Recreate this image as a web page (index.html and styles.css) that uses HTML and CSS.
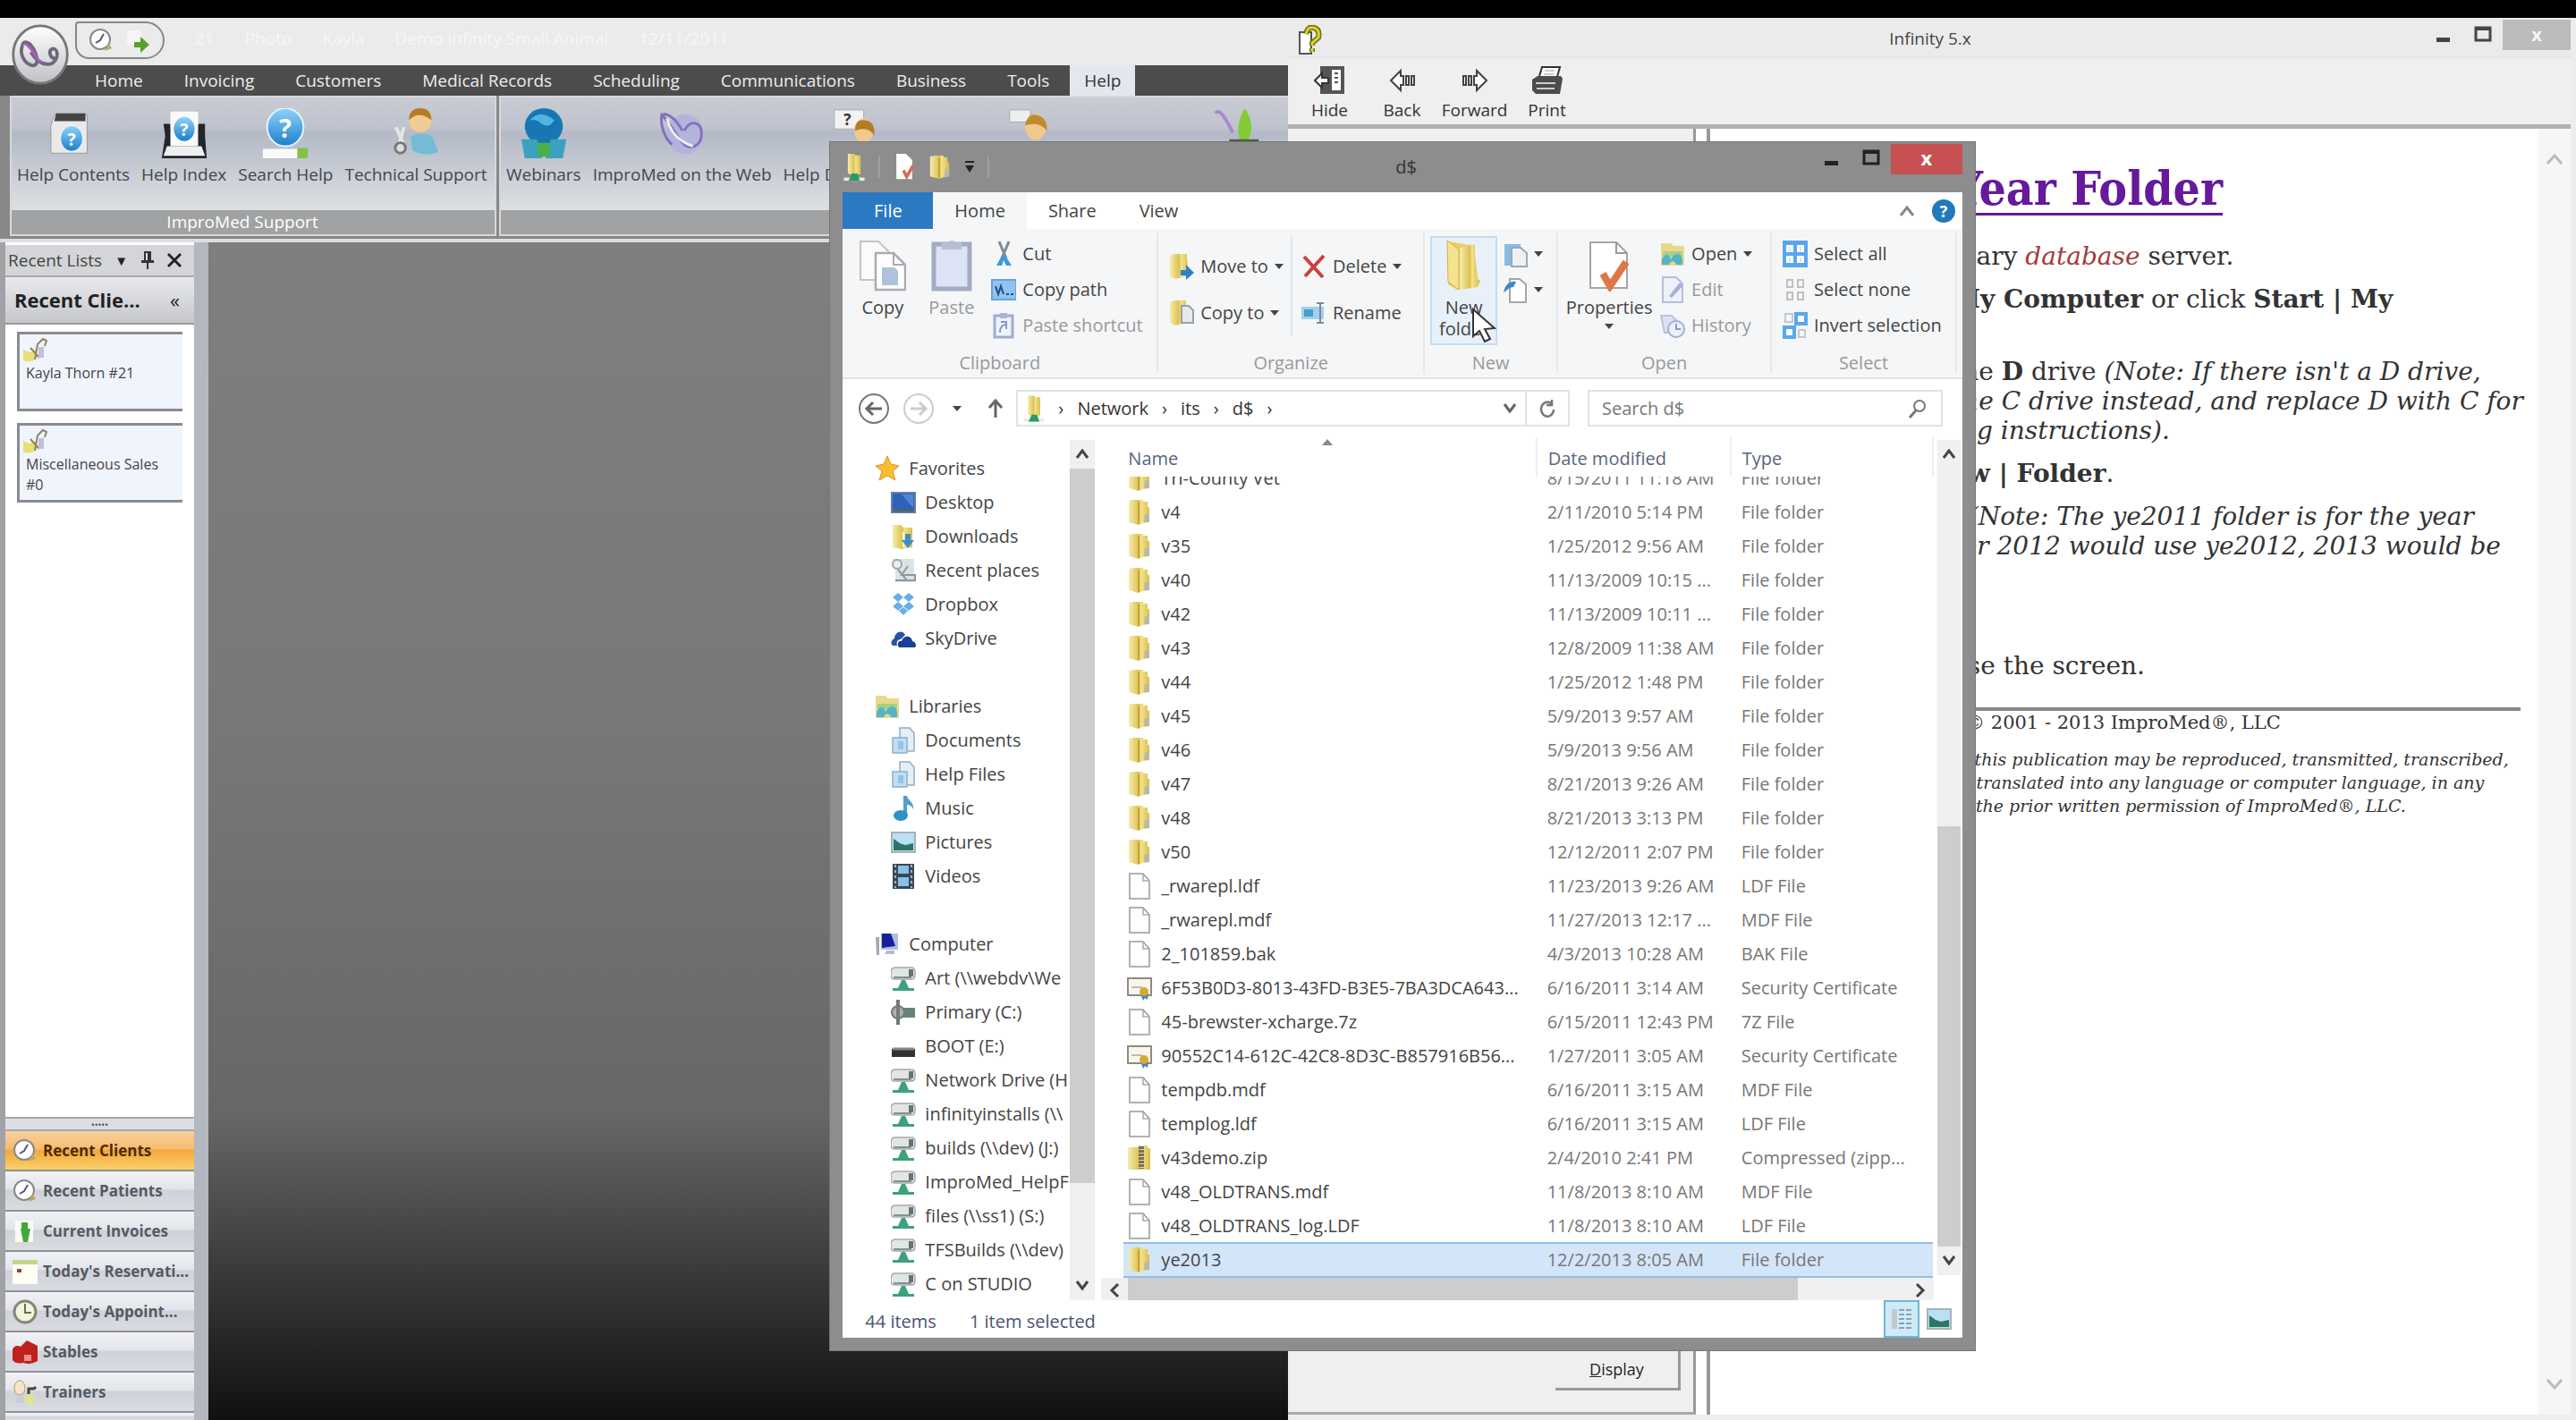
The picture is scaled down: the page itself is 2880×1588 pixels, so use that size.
FILE: index.html
```
<!DOCTYPE html>
<html lang="en">
<head>
    <meta charset="UTF-8">
    <meta name="viewport" content="width=device-width, initial-scale=1.0">
    <title>Infinity</title>
    <link rel="stylesheet" href="styles.css">
</head>
<body>
    <svg class="defs" aria-hidden="true">
        <linearGradient id="gold" x1="0" x2="1"><stop offset="0" stop-color="#f6ecae"/><stop offset=".5" stop-color="#dcc251"/><stop offset=".6" stop-color="#f3e38f"/><stop offset="1" stop-color="#d8bd4e"/></linearGradient>
        <linearGradient id="blue" x1="0" y1="0" x2="0" y2="1"><stop offset="0" stop-color="#8fd4fb"/><stop offset="1" stop-color="#1b7fcb"/></linearGradient>
        <linearGradient id="silver" x1="0" y1="0" x2="0" y2="1"><stop offset="0" stop-color="#fff"/><stop offset="1" stop-color="#bfc0c6"/></linearGradient>
        <symbol id="folder" viewBox="0 0 28 30"><path d="M2 2l6-1h10v2h5v6h2v17l-7 1-5 2-11-3z" fill="url(#gold)"/><path d="M13 4v24" stroke="#c4a436" stroke-width="2"/><path d="M20 17h5v9h-6z" fill="#b9b8a4"/></symbol>
        <symbol id="file" viewBox="0 0 28 30"><path d="M3 1h15l7 8v20H3z" fill="#fff" stroke="#999" stroke-width="1.5"/><path d="M18 1v8h7" fill="none" stroke="#aaa" stroke-width="1.5"/></symbol>
        <symbol id="cert" viewBox="0 0 28 30"><rect x="1" y="4" width="26" height="19" fill="#f8f5ec" stroke="#8e8a80" stroke-width="2"/><path d="M5 14h12" stroke="#bbb" stroke-width="2"/><path d="M15 21l3 8 2-3 3 2 1-7z" fill="#4c7fc0"/><circle cx="19" cy="19" r="5" fill="#d5ab2d"/></symbol>
        <symbol id="zip" viewBox="0 0 28 30"><path d="M1 3h12v-2h10v3h3v24H1z" fill="url(#gold)"/><path d="M16 2v25" stroke="#77715a" stroke-width="6" stroke-dasharray="3 1"/></symbol>
        <symbol id="star" viewBox="0 0 28 30"><path d="M14 1l4 9 9 2-7 6 3 10-9-5-9 5 3-10-7-6 9-2z" fill="#f8bd32" stroke="#dc9235"/></symbol>
        <symbol id="desktop" viewBox="0 0 28 30"><rect x="1" y="4" width="26" height="22" fill="#2e62b8" stroke="#6580a8" stroke-width="2"/><path d="M2 24h24" stroke="#53616f" stroke-width="3"/><path d="M12 6l13 15V6z" fill="#4f86d6"/></symbol>
        <symbol id="downloads" viewBox="0 0 28 30"><path d="M2 2h9l3 3h10v22l-12 2-10-2z" fill="url(#gold)"/><path d="M14 10v17" stroke="#fff8c8" stroke-width="2"/><path d="M16 12h6v7h4l-7 9-7-9h4z" fill="#3b8fcc"/></symbol>
        <symbol id="recent" viewBox="0 0 28 30"><path d="M2 2h24v26H5V14z" fill="#dde2e4"/><circle cx="7" cy="8" r="5" fill="#eee" stroke="#9ba5a9" stroke-width="2"/><path d="M5 26h22v-6H12l7-10M8 14l10 12" fill="none" stroke="#8d999e" stroke-width="2"/></symbol>
        <symbol id="dropbox" viewBox="0 0 28 30"><path d="M8 2l6 5-6 5-6-5zM20 2l6 5-6 5-6-5zM8 12l6 5-6 5-6-5zM20 12l6 5-6 5-6-5zM14 18l5 4-5 5-5-5z" fill="#68aee8"/></symbol>
        <symbol id="cloud" viewBox="0 0 28 30"><path d="M2 23c-3-3-1-7 2-8 0-6 8-11 12-4l-5 5c-4 0-5 4-4 7z" fill="#2753a4"/><path d="M9 25c-3-4 0-8 3-7 2-7 11-7 12 0 4 1 5 5 3 7z" fill="#1b3f98"/></symbol>
        <symbol id="library" viewBox="0 0 28 30"><path d="M1 3h11l3 3h12v22H1z" fill="#e8d98a"/><path d="M3 12h22v6H3z" fill="#a9cf87"/><path d="M2 27v-6c4-7 8-7 10 0 4-9 12-7 13 0v6h-7c-2-5-6-5-8 0z" fill="#55b4c7"/></symbol>
        <symbol id="docs" viewBox="0 0 28 30"><path d="M10 1h11l5 6v20H10z" fill="#e3eef7" stroke="#96abc0" stroke-width="1.5"/><path d="M2 12h16v17H2z" fill="#c4def0" stroke="#87b1d0" stroke-width="1.5"/><path d="M8 16h6v9H8z" fill="#91c4e8"/></symbol>
        <symbol id="music" viewBox="0 0 28 30"><path d="M14 1h4c1 5 8 7 7 15-2-4-4-5-7-5v13h-4z" fill="#519fce"/><ellipse cx="11" cy="23" rx="8" ry="6" fill="#318fc9"/></symbol>
        <symbol id="pictures" viewBox="0 0 28 30"><rect x="1" y="4" width="26" height="22" fill="#b9e0f5" stroke="#a6b2b8" stroke-width="2"/><path d="M3 11l7 5 6 2 9-2v8H3z" fill="#2e7663"/></symbol>
        <symbol id="videos" viewBox="0 0 28 30"><path d="M2 1h24v28H2z" fill="#35495a"/><path d="M8 3h12v9H8zM8 16h12v10H8z" fill="#8ac0e2"/><path d="M5 2v26M23 2v26" stroke="#a5b3bd" stroke-width="2" stroke-dasharray="3 3"/></symbol>
        <symbol id="computer" viewBox="0 0 28 30"><path d="M1 7h4v20H2z" fill="#a3a9b5"/><path d="M7 3h19v18H7z" fill="#a9bfe6"/><path d="M8 3h10l5 14-15 2z" fill="#16209a"/><path d="M13 22h9v4H11z" fill="#b9bcc6"/></symbol>
        <symbol id="drive" viewBox="0 0 28 30"><path d="M4 3h19q4 0 4 5v3q0 5-4 5H4q-4 0-4-4V9q0-5 4-6z" fill="#e1e5e4" stroke="#a3abaa" stroke-width="1.5"/><path d="M3 14h20" stroke="#84918f" stroke-width="2"/><path d="M20 5h5v8h-5z" fill="#62756f"/><path d="M12 17h4l4 9h6v3H2v-3h6z" fill="#3da27a"/></symbol>
        <symbol id="disk" viewBox="0 0 28 30"><path d="M13 10h14v11H13z" fill="#668577"/><circle cx="8" cy="15" r="7" fill="#aab1b0" stroke="#727a79" stroke-width="2"/><path d="M8 1v28" stroke="#737a79" stroke-width="4"/></symbol>
        <symbol id="boot" viewBox="0 0 28 30"><path d="M1 18h26v9H1z" fill="#333"/><path d="M2 18h24" stroke="#888" stroke-width="3"/></symbol>
        <symbol id="netfolder" viewBox="0 0 28 36"><path d="M6 1h9v2h7v24H8l-2-2z" fill="url(#gold)"/><path d="M1 33h26" stroke="#e5ebe5" stroke-width="4"/><path d="M11 26h7l3 9H7z" fill="#2c9c5c"/></symbol>
        <symbol id="sheetcheck" viewBox="0 0 28 36"><path d="M4 1h12l8 8v24H4z" fill="#fff"/><path d="M13 22l4 8 8-14" stroke="#d9694d" stroke-width="4" fill="none"/></symbol>
        <symbol id="copy" viewBox="0 0 52 58"><path d="M1 2h20l11 11v32H1z" fill="#fbfbfb" stroke="#c4c4c4" stroke-width="2"/><path d="M18 15h20l13 13v28H18z" fill="#fff" stroke="#a9abb0" stroke-width="2.5"/><path d="M38 15v13h13" fill="none" stroke="#a9abb0" stroke-width="2"/><path d="M25 31h14l4 4v16H25z" fill="#afc1de"/></symbol>
        <symbol id="paste" viewBox="0 0 52 58"><rect x="6" y="5" width="40" height="50" fill="#dce3f5" stroke="#a2abc6" stroke-width="5"/><path d="M15 3h6q5-4 10 0h6v8H15z" fill="#b8bfd2"/></symbol>
        <symbol id="bigfolder" viewBox="0 0 52 58"><path d="M8 2l24 4h6v10l4 34-24 6-10-6z" fill="#e9cf5f"/><path d="M7 1l13 10v45L8 47z" fill="#f6e392" stroke="#d4b23c"/><path d="M21 9l16-4v36l7 5-3 7-20 3z" fill="url(#gold)"/></symbol>
        <symbol id="props" viewBox="0 0 52 58"><path d="M5 3h29l12 12v39H5z" fill="#fff" stroke="#a5a5a5" stroke-width="2"/><path d="M34 3v12h12" fill="none" stroke="#999" stroke-width="2"/><path d="M19 38l8 14 18-27" fill="none" stroke="#df7746" stroke-width="8"/></symbol>
        <symbol id="cut" viewBox="0 0 28 30"><path d="M9 1l8 19M20 1l-8 19" stroke="#7f8b96" stroke-width="3"/><path d="M12 17L6 28h6l2-6 3 6h6l-7-11z" fill="#3c9bd3"/></symbol>
        <symbol id="copypath" viewBox="0 0 28 30"><rect x="1" y="4" width="27" height="22" fill="#91c3f0" stroke="#66a4dc" stroke-width="2"/><path d="M5 11l3 9 3-9 3 9M17 20h3M22 20h3" stroke="#1d4f84" stroke-width="2" fill="none"/></symbol>
        <symbol id="shortcut" viewBox="0 0 28 30"><rect x="4" y="4" width="20" height="24" fill="#eef2fb" stroke="#9faccc" stroke-width="3"/><path d="M10 1h8v6h-8z" fill="#a9b5d0"/><path d="M10 23c0-7 3-9 7-9v-3h-6M17 10v9" stroke="#8798c2" stroke-width="2" fill="none"/></symbol>
        <symbol id="moveto" viewBox="0 0 28 30"><path d="M1 3l5-2h14v4l2 20-15 4-6-3z" fill="url(#gold)"/><path d="M13 19h6v-6l9 9-9 8v-5h-6z" fill="#2f80c4"/></symbol>
        <symbol id="copyto" viewBox="0 0 28 30"><path d="M1 3l5-2h13v4l2 20-14 4-6-3z" fill="url(#gold)"/><path d="M14 7h8l5 5v14H14z" fill="#e6e9ee" stroke="#999fa8" stroke-width="2"/></symbol>
        <symbol id="delete" viewBox="0 0 28 30"><path d="M3 4l21 23M25 3L4 26" stroke="#c9413c" stroke-width="4"/></symbol>
        <symbol id="rename" viewBox="0 0 28 30"><rect x="0" y="8" width="25" height="14" fill="#a3d0ec"/><path d="M3 11h10v8H3z" fill="#459fcd"/><path d="M17 4h8M17 26h8M21 4v22" stroke="#7e8a94" stroke-width="2"/></symbol>
        <symbol id="newitem" viewBox="0 0 28 30"><path d="M2 4h18v4H9v20H2z" fill="#86bce0"/><path d="M10 8h10l7 6v15H10z" fill="#edf1f4" stroke="#a0a8ae" stroke-width="2"/></symbol>
        <symbol id="easy" viewBox="0 0 28 30"><path d="M8 3h11l7 6v20H8z" fill="#fff" stroke="#a5a5a5" stroke-width="2"/><path d="M1 18C3 8 9 5 15 6l-3 6c-5 0-7 4-11 6z" fill="#3f88c9"/></symbol>
        <symbol id="edit" viewBox="0 0 28 30"><path d="M3 1h15l7 7v21H3z" fill="#eef1fa" stroke="#b6bedb" stroke-width="2"/><path d="M10 22l12-15 4 3-13 14z" fill="#a6b0d5"/></symbol>
        <symbol id="history" viewBox="0 0 28 30"><path d="M1 4h12l6 6v13H5z" fill="#dce1f2" stroke="#b9c1de" stroke-width="2"/><circle cx="18" cy="19" r="9" fill="#eceffa" stroke="#a4add3" stroke-width="2"/><path d="M18 13v6h5" stroke="#8f9aca" stroke-width="2" fill="none"/></symbol>
        <symbol id="selall" viewBox="0 0 28 30"><rect width="28" height="30" fill="#58a7ee"/><path d="M4 5h8v8H4zM16 5h8v8h-8zM4 17h8v8H4zM16 17h8v8h-8z" fill="#fff"/><path d="M8 7v5M20 7v5M8 19v5M20 19v5" stroke="#cde5fa" stroke-width="2"/></symbol>
        <symbol id="selnone" viewBox="0 0 28 30"><path d="M5 4h6v8H5zM17 4h6v8h-6zM5 18h6v8H5zM17 18h6v8h-6z" fill="none" stroke="#c0c0c0" stroke-width="2"/></symbol>
        <symbol id="selinv" viewBox="0 0 28 30"><path d="M3 2h8v9H3zM18 20h7v8h-7z" fill="none" stroke="#c4c8cc" stroke-width="2"/><path d="M15 2h11v11H15zM2 17h11v11H2z" fill="#fff" stroke="#58a7ee" stroke-width="4"/></symbol>
        <symbol id="clock" viewBox="0 0 30 30"><circle cx="14" cy="14" r="11" fill="#fff" stroke="#888" stroke-width="2"/><path d="M18 8l-4 7-5 3" stroke="#557" stroke-width="2" fill="none"/><path d="M23 18l4 6-8 3z" fill="#b9a66c"/></symbol>
        <symbol id="client" viewBox="0 0 30 30"><path d="M1 15l7 3 8-3v10q-9 6-15 2z" fill="#e9df76"/><path d="M14 26l3-17 6-6 4 2-2 6M9 13l10 11" fill="none" stroke="#8e8564" stroke-width="2"/><path d="M18 12h6v12h-6z" fill="#c5bedd"/></symbol>
    </svg>

    <div class="screen">
        <!-- practice management window -->
        <section class="app">
            <header class="app-title">
                <button class="orb" aria-label="Application menu">
                    <svg viewBox="0 0 70 74"><ellipse cx="35" cy="37" rx="32" ry="34" fill="url(#silver)" stroke="#777" stroke-width="3"/><path d="M14 26c-4 10 2 22 12 24 10 0 4-18-4-26-6-4-8 0-8 2M24 34c6 10 14 16 24 14 10-6 8-18 2-18-6 2-4 10 2 12" fill="none" stroke="#6e6878" stroke-width="4"/><path d="M16 24c8 2 14 18 20 22" fill="none" stroke="#a95fc0" stroke-width="3"/></svg>
                </button>
                <div class="quick">
                    <button aria-label="Time clock"><svg class="i30"><use href="#clock"/></svg></button>
                    <button aria-label="Log off"><svg class="i30" viewBox="0 0 30 30"><path d="M2 4h16v16H2z" fill="#f5f5f5"/><path d="M10 17h7v-6l10 9-10 9v-6h-7z" fill="#58a12c"/></svg></button>
                </div>
                <span>21</span><span>Photo</span><span>Kayla</span><span>Demo Infinity Small Animal</span><span>12/11/2011</span>
            </header>
            <nav class="app-tabs">
                <button>Home</button><button>Invoicing</button><button>Customers</button><button>Medical Records</button><button>Scheduling</button><button>Communications</button><button>Business</button><button>Tools</button><button class="on">Help</button>
            </nav>
            <div class="app-ribbon">
                <div class="group">
                    <div class="group-buttons">
                        <button><svg viewBox="0 0 56 60"><path d="M6 8h38v44H2V20z" fill="#e9e9ea" stroke="#999"/><path d="M8 6h34v9H6z" fill="#444"/><ellipse cx="26" cy="35" rx="13" ry="15" fill="url(#blue)" stroke="#fff"/><text x="26" y="43" class="q">?</text></svg>Help Contents</button>
                        <button><svg viewBox="0 0 56 60"><path d="M4 18h8l2 24h28l2-24h8v14l2 26H2l4-26z" fill="#22262b"/><path d="M12 4h32v40H12z" fill="#fafafa"/><path d="M8 44h40l4 11H4z" fill="#f0f0f0"/><ellipse cx="28" cy="24" rx="12" ry="14" fill="url(#blue)"/><text x="28" y="32" class="q">?</text></svg>Help Index</button>
                        <button><svg viewBox="0 0 56 60"><ellipse cx="28" cy="22" rx="21" ry="22" fill="url(#blue)" stroke="#e4f4ff" stroke-width="2"/><text x="28" y="34" class="q large">?</text><path d="M2 47h40v11H2z" fill="#fafafa"/><path d="M42 46h12v12H42z" fill="#83c341"/></svg>Search Help</button>
                        <button><svg viewBox="0 0 56 60"><ellipse cx="33" cy="14" rx="13" ry="14" fill="#f0cb94"/><path d="M20 14Q20 0 33 0t13 14q-7-6-14-6t-12 6z" fill="#b67d24"/><path d="M22 33q12-7 25 0l7 18q-15 6-30-2z" fill="#74bcd6"/><path d="M5 22l8 18M14 22L8 44" stroke="#e6e6e6" stroke-width="4"/><circle cx="10" cy="46" r="6" fill="#ddd" stroke="#777" stroke-width="3"/></svg>Technical Support</button>
                    </div>
                    <div class="group-name">ImproMed Support</div>
                </div>
                <div class="group wide">
                    <div class="group-buttons">
                        <button><svg viewBox="0 0 56 60"><ellipse cx="28" cy="21" rx="22" ry="21" fill="#1777b3"/><path d="M12 14q12-14 28 0-6 10-14 4t-14-4z" fill="#4fb7dc"/><path d="M2 36h18l6 22H6zM36 36h18l-4 22H30z" fill="#3ca0c1"/><path d="M20 40h15v16H22z" fill="#4bb04a"/></svg>Webinars</button>
                        <button><svg viewBox="0 0 56 60"><ellipse cx="31" cy="30" rx="22" ry="23" fill="#b3b4dd"/><path d="M4 8c6-4 16 4 24 18M30 26c8-14 20-10 20 4s-14 20-22 10S10 12 4 8c-2 12 4 28 12 34" fill="none" stroke="#8570b9" stroke-width="3"/><path d="M10 12q6 24 30 32" fill="none" stroke="#eee" stroke-width="3"/></svg>ImproMed on the Web</button>
                        <button class="w1" aria-label="Help Desk"><svg viewBox="0 0 56 60"><path d="M4 2h34v22H4z" fill="#f2f2f2" stroke="#aaa"/><text x="19" y="20" class="q dark">?</text><ellipse cx="38" cy="26" rx="11" ry="14" fill="#f0c98f"/><path d="M28 26q0-14 12-12t10 18q-6-12-22-6z" fill="#b27d24"/></svg>Help D</button>
                        <button class="w2" aria-label="Customer support"><svg viewBox="0 0 56 60"><path d="M4 2h24v14H4z" fill="#eee" stroke="#aaa"/><ellipse cx="34" cy="22" rx="12" ry="15" fill="#f0c98f"/><path d="M22 20q2-15 14-12t11 18q-10-12-25-6z" fill="#c08a2d"/></svg></button>
                        <button class="w3" aria-label="Release notes"><svg viewBox="0 0 56 60"><path d="M2 6c4-6 10 2 20 22" fill="none" stroke="#aa86cf" stroke-width="4"/><path d="M36 0q16 24-2 46-12-24 2-46z" fill="#83cb35"/><path d="M18 36h34v8H18z" fill="#4c6042"/></svg></button>
                    </div>
                    <div class="group-name"></div>
                </div>
            </div>
            <div class="work">
                <aside class="side">
                    <div class="side-top"><span>Recent Lists</span><button aria-label="Options">▼</button>
                        <button aria-label="Pin"><svg viewBox="0 0 16 22"><path d="M4 1h8v10h3v3H9v7H7v-7H1v-3h3z" fill="#333"/><path d="M6 3h2v8H6z" fill="#ddd"/></svg></button>
                        <button aria-label="Close"><svg viewBox="0 0 16 22"><path d="M1 4l14 14M15 4L1 18" stroke="#222" stroke-width="3"/></svg></button></div>
                    <h2>Recent Clie...<span>«</span></h2>
                    <div class="cards">
                        <button class="card"><svg class="i30"><use href="#client"/></svg>Kayla Thorn #21</button>
                        <button class="card"><svg class="i30"><use href="#client"/></svg>Miscellaneous Sales #0</button>
                    </div>
                    <div class="grip">•••••</div>
                    <button class="bar on"><svg class="i30"><use href="#clock"/></svg>Recent Clients</button>
                    <button class="bar"><svg class="i30"><use href="#clock"/></svg>Recent Patients</button>
                    <button class="bar"><svg class="i30" viewBox="0 0 30 30"><path d="M4 3h20v24H4z" fill="#f8fff5"/><path d="M11 5h7v7h3l-3 15h-5l-3-15h1z" fill="#46a63c"/></svg>Current Invoices</button>
                    <button class="bar"><svg class="i30" viewBox="0 0 30 30"><path d="M1 3h28v26H1z" fill="#fffef5"/><path d="M1 2h28v5H1z" fill="#c5d58c"/><path d="M6 12h5v4H6z" fill="#8a4a3c"/></svg>Today's Reservati...</button>
                    <button class="bar"><svg class="i30" viewBox="0 0 30 30"><circle cx="15" cy="15" r="12" fill="#f1f2df" stroke="#868673" stroke-width="3"/><path d="M15 6v10h7" stroke="#71713a" stroke-width="2" fill="none"/></svg>Today's Appoint...</button>
                    <button class="bar"><svg class="i30" viewBox="0 0 30 30"><path d="M1 12q3-6 9-3l7-7 12 6v17q-8 5-16 2-8 2-12-3z" fill="#c1211c"/><path d="M14 18h8v7h-8z" fill="#ef9088"/></svg>Stables</button>
                    <button class="bar"><svg class="i30" viewBox="0 0 30 30"><ellipse cx="9" cy="10" rx="6" ry="8" fill="#f3e6cc" stroke="#b79b60"/><path d="M3 27q2-9 10-9l4 9z" fill="#cdcbe0"/><circle cx="20" cy="23" r="6" fill="#dce693"/><path d="M19 17v-6h6l2-2" stroke="#444" stroke-width="3" fill="none"/></svg>Trainers</button>
                    <div class="bar last"></div>
                </aside>
            </div>
        </section>

        <!-- help viewer -->
        <section class="help">
            <header class="help-title">
                <svg viewBox="0 0 28 34"><path d="M3 8h13v24H3z" fill="#fff" stroke="#555" stroke-width="2"/><path d="M10 10q2-9 9-7t5 11l-7 6v3M17 26v4" fill="none" stroke="#6c6b16" stroke-width="6"/><path d="M10 10q2-9 9-7t5 11l-7 6v3M17 26v4" fill="none" stroke="#d5d52c" stroke-width="3"/></svg>
                <h1>Infinity 5.x</h1>
                <button aria-label="Minimize"><svg viewBox="0 0 20 24"><path d="M2 15h15v5H2z" fill="#444"/></svg></button>
                <button aria-label="Maximize"><svg viewBox="0 0 20 24"><path d="M2 4h16v14H2z" fill="none" stroke="#444" stroke-width="3"/><path d="M2 5h16" stroke="#444" stroke-width="4"/></svg></button>
                <button class="close" aria-label="Close">x</button>
            </header>
            <div class="help-tools">
                <button><svg viewBox="0 0 36 34"><path d="M7 1h27v31H7z" fill="#555"/><path d="M20 5h10v23H20z" fill="#fff"/><path d="M23 9h4M23 14h4M23 19h4" stroke="#555" stroke-width="2"/><path d="M1 17l8-8v5h7v6H9v5z" fill="#fff" stroke="#333" stroke-width="2"/></svg>Hide</button>
                <button><svg viewBox="0 0 36 34"><path d="M5 17l11-11v6h3v10h-3v6zM22 12h3v10h-3zM28 12h3v10h-3z" fill="#fff" stroke="#444" stroke-width="2"/></svg>Back</button>
                <button><svg viewBox="0 0 36 34"><path d="M31 17L20 6v6h-3v10h3v6zM11 12h3v10h-3zM5 12h3v10H5z" fill="#fff" stroke="#444" stroke-width="2"/></svg>Forward</button>
                <button><svg viewBox="0 0 36 34"><path d="M12 2h20l-4 14H8z" fill="#fff" stroke="#333" stroke-width="2"/><path d="M1 16l6-4h26l2 3-3 17H5l-4-4z" fill="#4c4c4c"/><path d="M5 20h22M6 26h20M15 6h11M14 10h11" stroke="#ccc" stroke-width="2"/></svg>Print</button>
            </div>
            <div class="help-body">
                <div class="help-index"><button><u>D</u>isplay</button></div>
                <article class="topic">
                    <h1><a href="#">Year Folder</a></h1>
                    <p>mary <em class="term">database</em> server.</p>
                    <p class="skip-one"><b>My Computer</b> or click <b>Start | My</b></p>
                    <p>the <b>D</b> drive <em>(Note: If there isn't a D drive,<br>the C drive instead, and replace D with C for<br>ing instructions).</em></p>
                    <p><b>ew | Folder</b>.</p>
                    <p class="skip-two"><em>&nbsp;&nbsp;(Note: The ye2011 folder is for the year<br>for 2012 would use ye2012, 2013 would be</em></p>
                    <p>ose the screen.</p>
                    <footer>
                        <p>t © 2001 - 2013 ImproMed®, LLC</p>
                        <p class="legal">of this publication may be reproduced, transmitted, transcribed,<br>or translated into any language or computer language, in any<br>ut the prior written permission of ImproMed®, LLC.</p>
                    </footer>
                </article>
                <div class="help-scroll"><svg viewBox="0 0 20 12"><path d="M2 11l8-9 8 9" class="chev pale"/></svg><svg viewBox="0 0 20 12"><path d="M2 1l8 9 8-9" class="chev pale"/></svg></div>
            </div>
        </section>

        <!-- file explorer, on top of both windows -->
        <section class="explorer">
            <header class="ex-title">
                <svg class="tall"><use href="#netfolder"/></svg><i></i>
                <button aria-label="Properties"><svg class="tall"><use href="#sheetcheck"/></svg></button>
                <button aria-label="New folder"><svg class="tall"><use href="#folder"/></svg></button>
                <button aria-label="Customize"><svg viewBox="0 0 12 16"><path d="M1 2h10" stroke="#222" stroke-width="2"/><path d="M1 6h10l-5 8z" fill="#222"/></svg></button><i></i>
                <h1>d$</h1>
                <div class="sys">
                    <button aria-label="Minimize"><svg viewBox="0 0 20 24"><path d="M2 15h15v5H2z" fill="#222"/></svg></button>
                    <button aria-label="Maximize"><svg viewBox="0 0 20 24"><path d="M2 4h16v14H2z" fill="none" stroke="#222" stroke-width="3"/><path d="M2 5h16" stroke="#222" stroke-width="4"/></svg></button>
                    <button class="close" aria-label="Close">x</button>
                </div>
            </header>
            <nav class="ex-tabs">
                <button class="menu">File</button><button class="on">Home</button><button>Share</button><button>View</button>
                <span class="ex-help"><button aria-label="Collapse ribbon"><svg viewBox="0 0 20 12"><path d="M3 11l7-9 7 9" class="chev grey"/></svg></button><button class="round" aria-label="Help">?</button></span>
            </nav>
            <div class="ex-ribbon">
                <div class="rg">
                    <div class="rg-body">
                        <button class="big"><svg><use href="#copy"/></svg>Copy</button>
                        <button class="big off"><svg><use href="#paste"/></svg>Paste</button>
                        <div class="col three">
                            <button><svg><use href="#cut"/></svg>Cut</button>
                            <button><svg><use href="#copypath"/></svg>Copy path</button>
                            <button class="off"><svg><use href="#shortcut"/></svg>Paste shortcut</button>
                        </div>
                    </div>
                    <div class="rg-name">Clipboard</div>
                </div>
                <div class="rg">
                    <div class="rg-body">
                        <div class="col two">
                            <button class="drop"><svg><use href="#moveto"/></svg>Move to</button>
                            <button class="drop"><svg><use href="#copyto"/></svg>Copy to</button>
                        </div>
                        <div class="col two lined">
                            <button class="drop"><svg><use href="#delete"/></svg>Delete</button>
                            <button><svg><use href="#rename"/></svg>Rename</button>
                        </div>
                    </div>
                    <div class="rg-name">Organize</div>
                </div>
                <div class="rg">
                    <div class="rg-body">
                        <button class="big hot"><svg><use href="#bigfolder"/></svg>New<br>folder</button>
                        <div class="col three">
                            <button class="drop" aria-label="New item"><svg><use href="#newitem"/></svg></button>
                            <button class="drop" aria-label="Easy access"><svg><use href="#easy"/></svg></button>
                        </div>
                        <svg class="cursor" viewBox="0 0 28 40"><path d="M2 2v30l7-6 6 12 6-3-6-11 11-1z" fill="#fff" stroke="#333" stroke-width="2"/></svg>
                    </div>
                    <div class="rg-name">New</div>
                </div>
                <div class="rg">
                    <div class="rg-body">
                        <button class="big props"><svg><use href="#props"/></svg>Properties<span class="arrow"></span></button>
                        <div class="col three">
                            <button class="drop"><svg><use href="#library"/></svg>Open</button>
                            <button class="off"><svg><use href="#edit"/></svg>Edit</button>
                            <button class="off"><svg><use href="#history"/></svg>History</button>
                        </div>
                    </div>
                    <div class="rg-name">Open</div>
                </div>
                <div class="rg">
                    <div class="rg-body">
                        <div class="col three">
                            <button><svg><use href="#selall"/></svg>Select all</button>
                            <button><svg><use href="#selnone"/></svg>Select none</button>
                            <button><svg><use href="#selinv"/></svg>Invert selection</button>
                        </div>
                    </div>
                    <div class="rg-name">Select</div>
                </div>
            </div>
            <div class="ex-address">
                <button aria-label="Back"><svg viewBox="0 0 36 36"><circle cx="18" cy="18" r="16" fill="#fff" stroke="#777" stroke-width="2"/><path d="M27 18H10M17 11l-7 7 7 7" stroke="#666" stroke-width="3" fill="none"/></svg></button>
                <button aria-label="Forward"><svg viewBox="0 0 36 36"><circle cx="18" cy="18" r="16" fill="#fff" stroke="#ccc" stroke-width="2"/><path d="M9 18h17M19 11l7 7-7 7" stroke="#ccc" stroke-width="3" fill="none"/></svg></button>
                <button aria-label="Recent locations"><span class="arrow"></span></button>
                <button aria-label="Up"><svg viewBox="0 0 36 36"><path d="M18 28V10M11 17l7-8 7 8" stroke="#666" stroke-width="3" fill="none"/></svg></button>
                <div class="crumbs">
                    <svg><use href="#netfolder"/></svg><span>›</span><a href="#">Network</a><span>›</span><a href="#">its</a><span>›</span><a href="#">d$</a><span>›</span>
                    <button class="down" aria-label="Previous locations"><svg viewBox="0 0 20 12"><path d="M4 1l6 8 6-8" class="chev dim"/></svg></button>
                    <button class="reload" aria-label="Refresh"><svg viewBox="0 0 24 26"><path d="M17 8a7 8 0 1 0 2 6M17 3v6h-6" fill="none" stroke="#777" stroke-width="2.5"/></svg></button>
                </div>
                <label class="search"><input type="text" placeholder="Search d$" aria-label="Search d$"><svg viewBox="0 0 24 26"><circle cx="14" cy="10" r="6" fill="none" stroke="#777" stroke-width="2"/><path d="M10 15l-7 8" stroke="#777" stroke-width="3"/></svg></label>
            </div>
            <div class="ex-main">
                <nav class="tree">
                    <ul>
                        <li class="root"><svg><use href="#star"/></svg>Favorites</li>
                        <li><svg><use href="#desktop"/></svg>Desktop</li>
                        <li><svg><use href="#downloads"/></svg>Downloads</li>
                        <li><svg><use href="#recent"/></svg>Recent places</li>
                        <li><svg><use href="#dropbox"/></svg>Dropbox</li>
                        <li><svg><use href="#cloud"/></svg>SkyDrive</li>
                    </ul>
                    <ul>
                        <li class="root"><svg><use href="#library"/></svg>Libraries</li>
                        <li><svg><use href="#docs"/></svg>Documents</li>
                        <li><svg><use href="#docs"/></svg>Help Files</li>
                        <li><svg><use href="#music"/></svg>Music</li>
                        <li><svg><use href="#pictures"/></svg>Pictures</li>
                        <li><svg><use href="#videos"/></svg>Videos</li>
                    </ul>
                    <ul>
                        <li class="root"><svg><use href="#computer"/></svg>Computer</li>
                        <li><svg><use href="#drive"/></svg>Art (\\webdv\We</li>
                        <li><svg><use href="#disk"/></svg>Primary (C:)</li>
                        <li><svg><use href="#boot"/></svg>BOOT (E:)</li>
                        <li><svg><use href="#drive"/></svg>Network Drive (H</li>
                        <li><svg><use href="#drive"/></svg>infinityinstalls (\\</li>
                        <li><svg><use href="#drive"/></svg>builds (\\dev) (J:)</li>
                        <li><svg><use href="#drive"/></svg>ImproMed_HelpF</li>
                        <li><svg><use href="#drive"/></svg>files (\\ss1) (S:)</li>
                        <li><svg><use href="#drive"/></svg>TFSBuilds (\\dev)</li>
                        <li><svg><use href="#drive"/></svg>C on STUDIO</li>
                    </ul>
                </nav>
                <div class="vbar"><svg viewBox="0 0 20 12"><path d="M4 10l6-8 6 8" class="chev"/></svg><div class="track tree-track"><div class="thumb"></div></div><svg viewBox="0 0 20 12"><path d="M4 1l6 8 6-8" class="chev"/></svg></div>
                <div class="list">
                    <table>
                        <thead><tr><th>Name<svg class="sort" viewBox="0 0 12 7"><path d="M0 7l6-7 6 7z" fill="#888"/></svg></th><th>Date modified</th><th>Type</th></tr></thead>
                        <tbody>
                            <tr class="cut"><td><div><svg><use href="#folder"/></svg>Tri-County Vet</div></td><td><div>8/15/2011 11:18 AM</div></td><td><div>File folder</div></td></tr>
                            <tr><td><div><svg><use href="#folder"/></svg>v4</div></td><td>2/11/2010 5:14 PM</td><td>File folder</td></tr>
                            <tr><td><div><svg><use href="#folder"/></svg>v35</div></td><td>1/25/2012 9:56 AM</td><td>File folder</td></tr>
                            <tr><td><div><svg><use href="#folder"/></svg>v40</div></td><td>11/13/2009 10:15 ...</td><td>File folder</td></tr>
                            <tr><td><div><svg><use href="#folder"/></svg>v42</div></td><td>11/13/2009 10:11 ...</td><td>File folder</td></tr>
                            <tr><td><div><svg><use href="#folder"/></svg>v43</div></td><td>12/8/2009 11:38 AM</td><td>File folder</td></tr>
                            <tr><td><div><svg><use href="#folder"/></svg>v44</div></td><td>1/25/2012 1:48 PM</td><td>File folder</td></tr>
                            <tr><td><div><svg><use href="#folder"/></svg>v45</div></td><td>5/9/2013 9:57 AM</td><td>File folder</td></tr>
                            <tr><td><div><svg><use href="#folder"/></svg>v46</div></td><td>5/9/2013 9:56 AM</td><td>File folder</td></tr>
                            <tr><td><div><svg><use href="#folder"/></svg>v47</div></td><td>8/21/2013 9:26 AM</td><td>File folder</td></tr>
                            <tr><td><div><svg><use href="#folder"/></svg>v48</div></td><td>8/21/2013 3:13 PM</td><td>File folder</td></tr>
                            <tr><td><div><svg><use href="#folder"/></svg>v50</div></td><td>12/12/2011 2:07 PM</td><td>File folder</td></tr>
                            <tr><td><div><svg><use href="#file"/></svg>_rwarepl.ldf</div></td><td>11/23/2013 9:26 AM</td><td>LDF File</td></tr>
                            <tr><td><div><svg><use href="#file"/></svg>_rwarepl.mdf</div></td><td>11/27/2013 12:17 ...</td><td>MDF File</td></tr>
                            <tr><td><div><svg><use href="#file"/></svg>2_101859.bak</div></td><td>4/3/2013 10:28 AM</td><td>BAK File</td></tr>
                            <tr><td><div><svg><use href="#cert"/></svg>6F53B0D3-8013-43FD-B3E5-7BA3DCA643...</div></td><td>6/16/2011 3:14 AM</td><td>Security Certificate</td></tr>
                            <tr><td><div><svg><use href="#file"/></svg>45-brewster-xcharge.7z</div></td><td>6/15/2011 12:43 PM</td><td>7Z File</td></tr>
                            <tr><td><div><svg><use href="#cert"/></svg>90552C14-612C-42C8-8D3C-B857916B56...</div></td><td>1/27/2011 3:05 AM</td><td>Security Certificate</td></tr>
                            <tr><td><div><svg><use href="#file"/></svg>tempdb.mdf</div></td><td>6/16/2011 3:15 AM</td><td>MDF File</td></tr>
                            <tr><td><div><svg><use href="#file"/></svg>templog.ldf</div></td><td>6/16/2011 3:15 AM</td><td>LDF File</td></tr>
                            <tr><td><div><svg><use href="#zip"/></svg>v43demo.zip</div></td><td>2/4/2010 2:41 PM</td><td>Compressed (zipp...</td></tr>
                            <tr><td><div><svg><use href="#file"/></svg>v48_OLDTRANS.mdf</div></td><td>11/8/2013 8:10 AM</td><td>MDF File</td></tr>
                            <tr><td><div><svg><use href="#file"/></svg>v48_OLDTRANS_log.LDF</div></td><td>11/8/2013 8:10 AM</td><td>LDF File</td></tr>
                            <tr class="picked"><td><div><svg><use href="#folder"/></svg>ye2013</div></td><td>12/2/2013 8:05 AM</td><td>File folder</td></tr>
                        </tbody>
                    </table>
                    <div class="hbar"><svg viewBox="0 0 12 20"><path d="M10 3l-7 7 7 7" class="chev"/></svg><div class="track"><div class="thumb"></div></div><svg viewBox="0 0 12 20"><path d="M2 3l7 7-7 7" class="chev"/></svg></div>
                </div>
                <div class="vbar list-bar"><svg viewBox="0 0 20 12"><path d="M4 10l6-8 6 8" class="chev"/></svg><div class="track list-track"><div class="thumb"></div></div><svg viewBox="0 0 20 12"><path d="M4 1l6 8 6-8" class="chev"/></svg></div>
            </div>
            <footer class="ex-status">
                <span>44 items</span><span>1 item selected</span>
                <button class="on" aria-label="Details view"><svg viewBox="0 0 28 30"><path d="M3 4h6v22H3z" fill="#c3c9cc"/><path d="M11 5h14M11 10h14M11 15h14M11 20h14M11 25h14" stroke="#86a3b2" stroke-width="2" stroke-dasharray="6 2"/></svg></button>
                <button aria-label="Thumbnail view"><svg><use href="#pictures"/></svg></button>
            </footer>
        </section>
    </div>
</body>
</html>
```
FILE: styles.css
```
*{
    box-sizing: border-box;
}
body{
    margin: 0;
    background: #000;
    font-family: "Open Sans", "Noto Sans", sans-serif;
    font-size: 20px;
    line-height: 24px;
    color: #444;
}
button{
    font: inherit;
    color: inherit;
    background: none;
    border: none;
    padding: 0;
    margin: 0;
}
h1, h2, p, ul{
    margin: 0;
    padding: 0;
    font-weight: normal;
}
a{
    color: inherit;
    text-decoration: none;
}
svg{
    display: block;
    flex: none;
}
.defs{
    position: absolute;
    width: 0;
    height: 0;
}
.i30{
    width: 30px;
    height: 30px;
}
.chev{
    fill: none;
    stroke: #444;
    stroke-width: 3;
}
.chev.pale{
    stroke: #bbb;
}
.chev.grey{
    stroke: #888;
}
.chev.dim{
    stroke: #666;
}
.arrow, .drop::after{
    content: "";
    width: 0;
    height: 0;
    border: 5px solid transparent;
    border-top: 6px solid #444;
    border-bottom: none;
}
.screen{
    position: relative;
    display: grid;
    grid-template-columns: 1fr 1fr;
    height: 100vh;
    padding-top: 20px;
    overflow: hidden;
}

/* practice management window */
.app{
    display: flex;
    flex-direction: column;
    min-width: 0;
    min-height: 0;
    overflow: hidden;
    font-size: 19px;
    background: #888;
}
.app-title{
    position: relative;
    flex: none;
    display: flex;
    height: 53px;
    padding: 11px 0 0 84px;
    gap: 34px;
    background: #ebebeb;
    color: #f6f6f6;
}
.orb{
    position: absolute;
    left: 10px;
    top: 6px;
    width: 70px;
    height: 70px;
}
.orb svg{
    width: 70px;
    height: 70px;
}
.quick{
    display: flex;
    gap: 12px;
    width: 100px;
    height: 42px;
    margin-top: -7px;
    padding: 4px 12px;
    border: 2px solid #888;
    border-radius: 4px 22px 22px 16px;
}
.app-tabs{
    flex: none;
    display: flex;
    height: 34px;
    padding-left: 83px;
    background: #4c4c4c;
    color: #eee;
}
.app-tabs button{
    padding: 0 23px;
}
.app-tabs .on{
    padding: 0 16px;
    background: #e3e7ee;
    color: #333;
}
.app-ribbon{
    flex: none;
    display: flex;
    gap: 7px;
    height: 164px;
    padding: 2px 0 5px 13px;
    background: #888;
    border-bottom: 4px solid #ddd;
}
.group{
    display: flex;
    flex-direction: column;
    flex: none;
    width: 540px;
    background: linear-gradient(#c9ccd5 0, #bfc3cd 22%, #b3b9c6 26%, #dde0e3 82%);
    outline: 2px solid #d6d8da;
}
.group.wide{
    flex: 1;
    width: auto;
    min-width: 0;
    overflow: hidden;
}
.group-buttons{
    flex: 1;
    display: flex;
    gap: 13px;
    padding: 12px 6px 0;
}
.group-buttons button{
    display: flex;
    flex: none;
    flex-direction: column;
    align-items: center;
    gap: 4px;
    white-space: nowrap;
    color: #44464c;
}
.group-buttons svg{
    width: 56px;
    height: 58px;
}
.group-buttons .w1{
    width: 160px;
    align-items: flex-start;
}
.w1 svg{
    align-self: center;
}
.w2{
    width: 206px;
}
.w3{
    width: 232px;
}
.q{
    font-size: 20px;
    font-weight: bold;
    text-anchor: middle;
    fill: #fff;
}
.q.large{
    font-size: 30px;
}
.q.dark{
    font-size: 18px;
    fill: #333;
}
.group-name{
    height: 27px;
    padding-right: 24px;
    line-height: 27px;
    text-align: center;
    color: #fff;
    background: #a0a2a3;
}
.work{
    flex: 1;
    display: flex;
    min-height: 0;
    background: linear-gradient(#7f7f7f 0, #787878 40%, #676767 74%, #383838 88%, #101010 100%);
}
.side{
    display: flex;
    flex-direction: column;
    width: 233px;
    padding-top: 3px;
    border-left: 6px solid #a0a2a6;
    border-right: 16px solid #b3b7bf;
    background: #fff;
}
.side-top{
    display: flex;
    flex: none;
    align-items: center;
    gap: 14px;
    height: 36px;
    padding-left: 3px;
    background: #d4d5d8;
    border-bottom: 2px solid #aaa;
}
.side-top button{
    font-size: 15px;
    color: #222;
}
.side-top svg{
    width: 16px;
    height: 22px;
}
.side h2{
    display: flex;
    flex: none;
    justify-content: space-between;
    height: 53px;
    padding: 0 16px 0 10px;
    font-size: 22px;
    line-height: 50px;
    font-weight: bold;
    color: #222;
    background: linear-gradient(#e9eaec, #c5c7cc);
    border-bottom: 2px solid #999;
}
.side h2 span{
    font-weight: normal;
}
.cards{
    flex: 1;
    display: flex;
    flex-direction: column;
    gap: 13px;
    padding: 8px 13px;
}
.card{
    display: flex;
    flex-direction: column;
    height: 89px;
    padding: 2px 20px 0 7px;
    font-size: 16px;
    line-height: 23px;
    text-align: left;
    background: #f0f4fd;
    border: 3px solid #888b90;
    border-right: none;
}
.card svg{
    margin-left: -4px;
}
.grip{
    height: 16px;
    font-size: 10px;
    line-height: 14px;
    text-align: center;
    background: #dcdee2;
    border: 2px solid #a5a7ac;
    border-width: 2px 0;
}
.bar{
    display: flex;
    flex: none;
    align-items: center;
    gap: 5px;
    height: 45px;
    padding-left: 7px;
    font-size: 17px;
    font-weight: bold;
    white-space: nowrap;
    color: #555a63;
    background: linear-gradient(#f1f2f5 0, #e3e5ea 45%, #cfd2d9 50%, #dadce2 100%);
    border-bottom: 2px solid #8d9096;
}
.bar.on{
    color: #4a2c08;
    background: linear-gradient(#f9cf9c 0, #f6bd71 45%, #f3a83b 50%, #fbd06a 100%);
}
.bar.last{
    height: 8px;
    border: none;
}

/* help viewer */
.help{
    display: flex;
    flex-direction: column;
    min-width: 0;
    min-height: 0;
    padding: 0 6px 6px 0;
    background: #ededed;
}
.help-title{
    display: flex;
    flex: none;
    gap: 24px;
    height: 45px;
    padding: 2px 0 0 10px;
    background: #ebebeb;
    border-bottom: 2px solid #e4e4e4;
}
.help-title > svg{
    width: 28px;
    height: 34px;
    margin-top: 6px;
}
.help-title h1{
    flex: 1;
    padding-left: 116px;
    font-size: 19px;
    line-height: 42px;
    text-align: center;
}
.help-title button svg, .sys svg{
    width: 20px;
    height: 24px;
}
.help-title button{
    align-self: flex-start;
    height: 34px;
}
.help-title .close{
    width: 76px;
    margin-left: -12px;
    font-weight: bold;
    color: #f5f5f5;
    background: #bcbcbc;
}
.help-tools{
    display: flex;
    flex: none;
    height: 74px;
    padding: 8px 0 0 6px;
    background: #efefef;
}
.help-tools button{
    display: flex;
    flex-direction: column;
    align-items: center;
    gap: 4px;
    width: 81px;
    font-size: 19px;
    color: #333;
}
.help-tools svg{
    width: 36px;
    height: 34px;
}
.help-body{
    flex: 1;
    display: flex;
    min-height: 0;
    background: #fff;
    border-top: 5px solid #b0b0b0;
}
.help-index{
    display: flex;
    flex: none;
    align-items: flex-end;
    justify-content: flex-end;
    width: 456px;
    padding: 0 14px 24px;
    background: #efefef;
    border-right: 3px solid #999;
    border-bottom: 3px solid #aaa;
}
.help-index button{
    width: 140px;
    height: 46px;
    font-size: 18px;
    color: #222;
    border: 3px solid #999;
    border-width: 0 3px 3px 0;
}
.topic{
    flex: 1;
    min-width: 0;
    margin-left: 12px;
    padding: 33px 20px 0 271px;
    border-left: 4px solid #999;
    font-family: "DejaVu Serif", serif;
    font-size: 28px;
    line-height: 33px;
    white-space: nowrap;
    color: #333;
}
.topic h1{
    margin-bottom: 26px;
    font-family: "DejaVu Serif Condensed", "DejaVu Serif", serif;
    font-size: 53px;
    line-height: 67px;
    font-weight: bold;
}
.topic h1 a{
    color: #66199a;
    text-decoration: underline;
    text-decoration-thickness: 3px;
    text-underline-offset: 9px;
}
.topic p{
    margin-bottom: 15px;
}
.topic .skip-one{
    margin-bottom: 48px;
}
.topic .skip-two{
    margin-bottom: 101px;
}
.term{
    color: #a33c3c;
}
.topic footer{
    margin-top: 30px;
    border-top: 4px solid #888;
}
.topic footer p{
    margin-bottom: 15px;
    font-size: 21px;
    line-height: 26px;
}
.topic footer .legal{
    font-size: 19px;
    font-style: italic;
}
.help-scroll{
    display: flex;
    flex: none;
    flex-direction: column;
    justify-content: space-between;
    width: 36px;
    padding: 28px 8px;
    background: #f6f6f6;
}

/* file explorer */
.explorer{
    position: absolute;
    top: 158px;
    bottom: 77px;
    left: 32.2%;
    width: 44.5%;
    display: flex;
    flex-direction: column;
    padding: 0 14px 14px;
    background: #8d8d8d;
    border: 1px solid #777;
}
.ex-title{
    display: flex;
    flex: none;
    align-items: center;
    gap: 14px;
    height: 56px;
}
.tall{
    width: 26px;
    height: 32px;
}
.ex-title button svg:not(.tall){
    width: 12px;
    height: 16px;
}
.ex-title i{
    width: 2px;
    height: 24px;
    background: #a0a0a0;
}
.ex-title h1{
    flex: 1;
    text-align: center;
    font-size: 20px;
    color: #333;
}
.sys{
    display: flex;
    align-self: flex-start;
    gap: 24px;
    padding-top: 2px;
}
.ex-title .sys button svg{
    width: 20px;
    height: 24px;
    margin-top: 4px;
}
.sys button{
    height: 34px;
    display: flex;
    justify-content: center;
}
.sys .close{
    width: 80px;
    margin-left: -12px;
    font-size: 22px;
    line-height: 30px;
    font-weight: bold;
    color: #fff;
    background: #c75050;
}
.ex-tabs{
    display: flex;
    flex: none;
    height: 41px;
    background: #fff;
}
.ex-tabs > button{
    padding: 0 24px;
}
.ex-tabs .menu{
    width: 101px;
    color: #fff;
    background: #2a79c2;
}
.ex-tabs .on{
    background: #f5f6f7;
}
.ex-help{
    display: flex;
    align-items: center;
    gap: 18px;
    margin-left: auto;
    padding-right: 8px;
}
.ex-help svg{
    width: 20px;
    height: 12px;
}
.round{
    width: 26px;
    height: 26px;
    border-radius: 50%;
    font-size: 18px;
    font-weight: bold;
    color: #fff;
    background: #2378bb;
}
.ex-ribbon{
    display: grid;
    flex: none;
    grid-template-columns: 353fr 298fr 149fr 239fr 207fr;
    height: 168px;
    padding: 4px 6px 4px 0;
    background: #f5f6f7;
    border-bottom: 2px solid #e0e2e4;
}
.rg{
    display: flex;
    flex-direction: column;
    min-width: 0;
    border-right: 2px solid #e6e8ea;
}
.rg-body{
    position: relative;
    flex: 1;
    display: flex;
    padding: 4px 6px 0;
}
.rg-name{
    height: 24px;
    text-align: center;
    color: #999;
}
.off{
    color: #999;
}
.big{
    align-self: flex-start;
    width: 77px;
    height: 122px;
    display: flex;
    flex-direction: column;
    align-items: center;
    padding-top: 4px;
}
.big svg{
    width: 52px;
    height: 58px;
    margin-bottom: 6px;
}
.big.hot{
    width: 75px;
    background: #e8f0fa;
    border: 2px solid #c5dcf3;
    padding-top: 2px;
}
.big.props{
    width: 102px;
}
.props .arrow{
    margin-top: 6px;
}
.col{
    display: flex;
    flex-direction: column;
    padding-left: 6px;
}
.col button{
    display: flex;
    align-items: center;
    gap: 7px;
    height: 40px;
    white-space: nowrap;
}
.col svg{
    width: 28px;
    height: 30px;
}
.two{
    padding-top: 8px;
    width: 150px;
    height: 112px;
}
.two button{
    height: 52px;
}
.two.lined{
    border-left: 2px solid #e2e6ea;
    padding-left: 10px;
}
.cursor{
    position: absolute;
    left: 52px;
    top: 84px;
    width: 28px;
    height: 40px;
}
.ex-address{
    display: flex;
    flex: none;
    align-items: center;
    gap: 14px;
    height: 65px;
    padding: 0 22px 0 17px;
    background: #fff;
}
.ex-address > button svg{
    width: 36px;
    height: 36px;
}
.ex-address > button .arrow{
    display: block;
    margin: 0 6px;
}
.crumbs{
    display: flex;
    flex: 607;
    align-items: center;
    gap: 15px;
    height: 41px;
    margin-left: -9px;
    padding-left: 6px;
    border: 2px solid #e2e2e2;
    color: #333;
}
.crumbs > svg{
    width: 24px;
    height: 32px;
}
.crumbs .down{
    margin-left: auto;
}
.crumbs .down svg{
    width: 20px;
    height: 12px;
}
.reload{
    align-self: stretch;
    display: flex;
    align-items: center;
    padding: 0 11px;
    margin-left: -8px;
    border-left: 2px solid #e2e2e2;
}
.reload svg, .search svg{
    width: 24px;
    height: 26px;
}
.search{
    display: flex;
    flex: 364;
    align-items: center;
    height: 41px;
    margin-left: 6px;
    padding: 0 14px;
    border: 2px solid #e2e2e2;
}
.search input{
    flex: 1;
    min-width: 0;
    font: inherit;
    border: none;
    outline: none;
    padding: 0;
    background: none;
}
.search input::placeholder{
    color: #777;
    opacity: 1;
}
.ex-main{
    flex: 1;
    display: flex;
    min-height: 0;
    background: #fff;
}
.tree{
    flex: none;
    width: 254px;
    padding-top: 16px;
    overflow: hidden;
}
.tree ul{
    list-style: none;
    margin-bottom: 38px;
}
.tree li{
    display: flex;
    align-items: center;
    gap: 10px;
    height: 38px;
    padding-left: 54px;
    white-space: nowrap;
}
.tree .root{
    padding-left: 36px;
}
.tree svg, td svg{
    width: 28px;
    height: 30px;
}
.vbar{
    display: flex;
    flex: none;
    flex-direction: column;
    align-items: center;
    width: 28px;
    margin-top: 3px;
    background: #f0f0f0;
}
.vbar svg{
    width: 20px;
    height: 12px;
    margin: 10px 0;
}
.track{
    flex: 1;
    display: flex;
    min-height: 0;
}
.vbar .track{
    width: 100%;
    flex-direction: column;
}
.thumb{
    background: #cdcdcd;
    flex: none;
}
.tree-track .thumb{
    height: 89%;
}
.list-track{
    justify-content: flex-end;
}
.list-track .thumb{
    height: 54%;
}
.list-bar{
    margin-right: 2px;
    margin-bottom: 28px;
    width: 26px;
}
.list{
    flex: 1;
    display: flex;
    flex-direction: column;
    justify-content: space-between;
    min-width: 0;
    padding: 0 4px 0 7px;
    overflow: hidden;
}
table{
    table-layout: fixed;
    align-self: flex-end;
    width: calc(100% - 25px);
    border-collapse: collapse;
}
th{
    position: relative;
    height: 44px;
    padding: 4px 0 0 12px;
    font-weight: normal;
    text-align: left;
    color: #5a6480;
    border-right: 2px solid #eee;
}
th:first-child{
    width: 51%;
    padding-left: 5px;
}
th:nth-child(2){
    width: 24%;
}
.sort{
    position: absolute;
    left: 222px;
    top: 2px;
    width: 12px;
    height: 7px;
}
td{
    height: 38px;
    padding: 0 0 0 12px;
    white-space: nowrap;
    color: #777;
}
td:first-child{
    padding-left: 4px;
    color: #444;
}
td:first-child div{
    display: flex;
    align-items: center;
    gap: 10px;
}
.cut td{
    height: 21px;
}
.cut td div, .cut td:first-child div{
    display: flex;
    align-items: flex-end;
    height: 21px;
    padding-bottom: 7px;
    overflow: hidden;
}
.cut svg{
    margin-bottom: -3px;
}
.picked td{
    background: #d3e5f9;
    border: 2px solid #8fbfe9;
    border-width: 2px 0;
}
.hbar{
    display: flex;
    flex: none;
    align-items: center;
    height: 27px;
    background: #f0f0f0;
}
.hbar svg{
    width: 12px;
    height: 20px;
    margin: 0 9px;
}
.hbar .track{
    height: 100%;
}
.hbar .thumb{
    width: 86%;
}
.ex-status{
    display: flex;
    flex: none;
    align-items: center;
    gap: 37px;
    height: 42px;
    padding: 0 12px 0 25px;
    color: #4a5472;
    background: #fff;
}
.ex-status span{
    padding-top: 5px;
}
.ex-status button{
    margin-left: -29px;
}
.ex-status .on{
    height: 42px;
    margin-left: auto;
    padding: 0 4px;
    background: #cfeaf8;
    border: 2px solid #6fb5d6;
}
.ex-status svg{
    width: 28px;
    height: 30px;
}
```
